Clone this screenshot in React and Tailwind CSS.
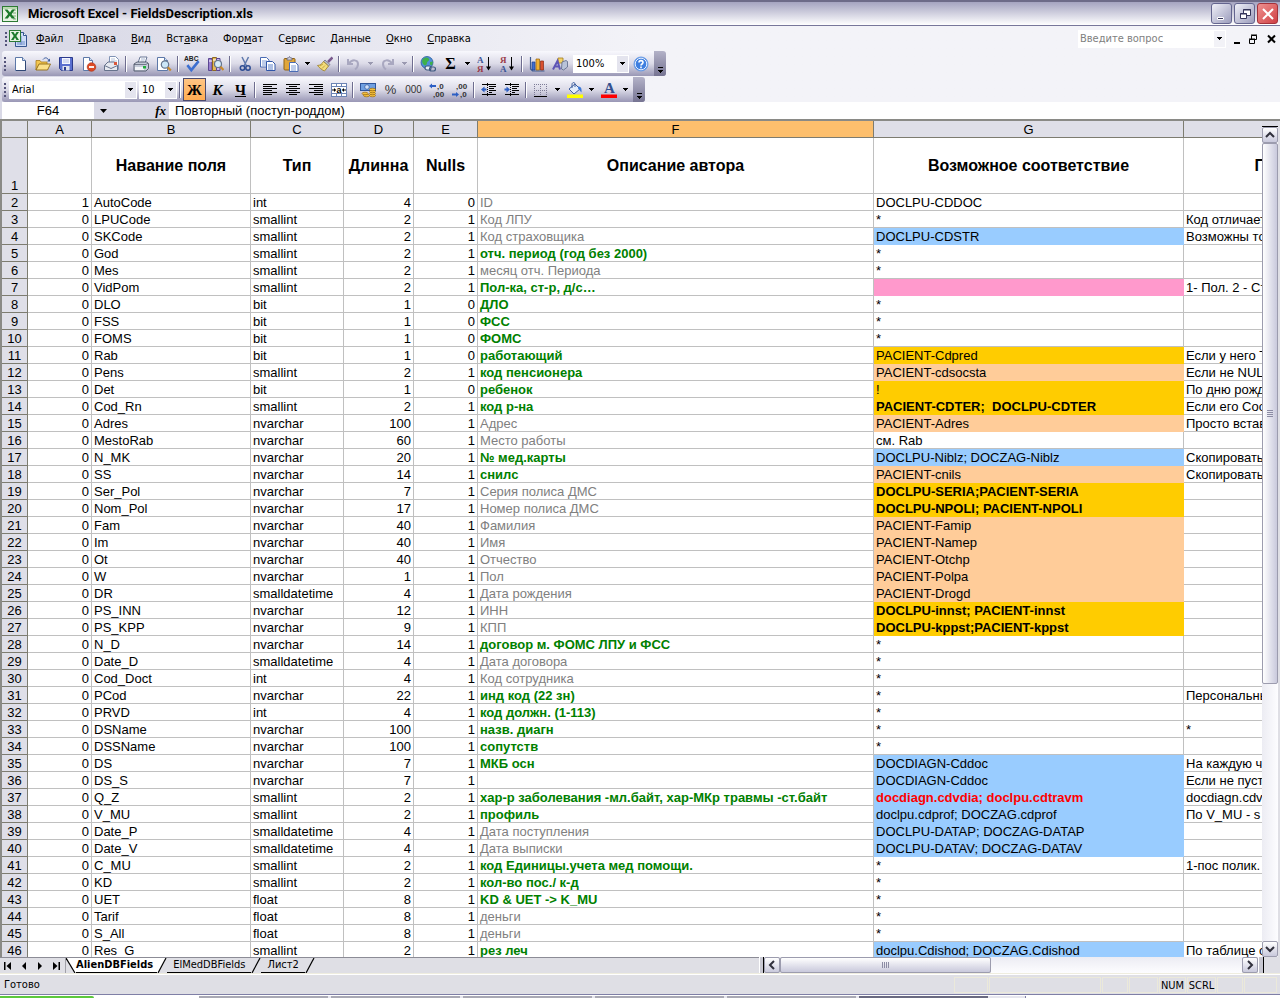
import React, { useState } from "react";

const cellFill = {
  none: "border-[#c0c0c0] bg-white",
  blue: "border-[#99ccff] bg-[#99ccff]",
  pink: "border-[#ff99cc] bg-[#ff99cc]",
  gold: "border-[#ffcc00] bg-[#ffcc00]",
  goldBold: "border-[#ffcc00] bg-[#ffcc00] font-bold",
  peach: "border-[#ffcc99] bg-[#ffcc99]",
  blueRed: "border-[#99ccff] bg-[#99ccff] font-bold text-[#ff0000]",
};

// code, name, type, length, nulls, description, is description green, match, match fill, note
const rows = [
  [1, "AutoCode", "int", 4, 0, "ID", false, "DOCLPU-CDDOC", "none", ""],
  [0, "LPUCode", "smallint", 2, 1, "Код ЛПУ", false, "*", "none", "Код отличает"],
  [0, "SKCode", "smallint", 2, 1, "Код страховщика", false, "DOCLPU-CDSTR", "blue", "Возможны то"],
  [0, "God", "smallint", 2, 1, "отч. период (год без 2000)", true, "*", "none", ""],
  [0, "Mes", "smallint", 2, 1, "месяц отч. Периода", false, "*", "none", ""],
  [0, "VidPom", "smallint", 2, 1, "Пол-ка, ст-р, д/с…", true, "", "pink", "1- Пол. 2 - Ст"],
  [0, "DLO", "bit", 1, 0, "ДЛО", true, "*", "none", ""],
  [0, "FSS", "bit", 1, 0, "ФСС", true, "*", "none", ""],
  [0, "FOMS", "bit", 1, 0, "ФОМС", true, "*", "none", ""],
  [0, "Rab", "bit", 1, 0, "работающий", true, "PACIENT-Cdpred", "gold", "Если у него Т"],
  [0, "Pens", "smallint", 2, 1, "код пенсионера", true, "PACIENT-cdsocsta", "peach", "Если не NUL"],
  [0, "Det", "bit", 1, 0, "ребенок", true, "!", "gold", "По дню рожд"],
  [0, "Cod_Rn", "smallint", 2, 1, "код р-на", true, "PACIENT-CDTER;  DOCLPU-CDTER", "goldBold", "Если его Соо"],
  [0, "Adres", "nvarchar", 100, 1, "Адрес", false, "PACIENT-Adres", "peach", "Просто встав"],
  [0, "MestoRab", "nvarchar", 60, 1, "Место работы", false, "см. Rab", "none", ""],
  [0, "N_MK", "nvarchar", 20, 1, "№ мед.карты", true, "DOCLPU-Niblz; DOCZAG-Niblz", "blue", "Скопировать"],
  [0, "SS", "nvarchar", 14, 1, "снилс", true, "PACIENT-cnils", "peach", "Скопировать"],
  [0, "Ser_Pol", "nvarchar", 7, 1, "Серия полиса ДМС", false, "DOCLPU-SERIA;PACIENT-SERIA", "goldBold", ""],
  [0, "Nom_Pol", "nvarchar", 17, 1, "Номер полиса ДМС", false, "DOCLPU-NPOLI; PACIENT-NPOLI", "goldBold", ""],
  [0, "Fam", "nvarchar", 40, 1, "Фамилия", false, "PACIENT-Famip", "peach", ""],
  [0, "Im", "nvarchar", 40, 1, "Имя", false, "PACIENT-Namep", "peach", ""],
  [0, "Ot", "nvarchar", 40, 1, "Отчество", false, "PACIENT-Otchp", "peach", ""],
  [0, "W", "nvarchar", 1, 1, "Пол", false, "PACIENT-Polpa", "peach", ""],
  [0, "DR", "smalldatetime", 4, 1, "Дата рождения", false, "PACIENT-Drogd", "peach", ""],
  [0, "PS_INN", "nvarchar", 12, 1, "ИНН", false, "DOCLPU-innst; PACIENT-innst", "goldBold", ""],
  [0, "PS_KPP", "nvarchar", 9, 1, "КПП", false, "DOCLPU-kppst;PACIENT-kppst", "goldBold", ""],
  [0, "N_D", "nvarchar", 14, 1, "договор м. ФОМС ЛПУ и ФСС", true, "*", "none", ""],
  [0, "Date_D", "smalldatetime", 4, 1, "Дата договора", false, "*", "none", ""],
  [0, "Cod_Doct", "int", 4, 1, "Код сотрудника", false, "*", "none", ""],
  [0, "PCod", "nvarchar", 22, 1, "инд код (22 зн)", true, "*", "none", "Персональны"],
  [0, "PRVD", "int", 4, 1, "код должн. (1-113)", true, "*", "none", ""],
  [0, "DSName", "nvarchar", 100, 1, "назв. диагн", true, "*", "none", "*"],
  [0, "DSSName", "nvarchar", 100, 1, "сопутств", true, "*", "none", ""],
  [0, "DS", "nvarchar", 7, 1, "МКБ осн", true, "DOCDIAGN-Cddoc", "blue", "На каждую ч"],
  [0, "DS_S", "nvarchar", 7, 1, "", false, "DOCDIAGN-Cddoc", "blue", "Если не пуст"],
  [0, "Q_Z", "smallint", 2, 1, "хар-р заболевания -мл.байт, хар-МКр травмы -ст.байт", true, "docdiagn.cdvdia; doclpu.cdtravm", "blueRed", "docdiagn.cdv"],
  [0, "V_MU", "smallint", 2, 1, "профиль", true, "doclpu.cdprof; DOCZAG.cdprof", "blue", "По V_MU - s"],
  [0, "Date_P", "smalldatetime", 4, 1, "Дата поступления", false, "DOCLPU-DATAP; DOCZAG-DATAP", "blue", ""],
  [0, "Date_V", "smalldatetime", 4, 1, "Дата выписки", false, "DOCLPU-DATAV; DOCZAG-DATAV", "blue", ""],
  [0, "C_MU", "smallint", 2, 1, "код Единицы.учета мед помощи.", true, "*", "none", "1-пос полик."],
  [0, "KD", "smallint", 2, 1, "кол-во пос./ к-д", true, "*", "none", ""],
  [0, "UET", "float", 8, 1, "KD & UET -> K_MU", true, "*", "none", ""],
  [0, "Tarif", "float", 8, 1, "деньги", false, "*", "none", ""],
  [0, "S_All", "float", 8, 1, "деньги", false, "*", "none", ""],
  [0, "Res_G", "smallint", 2, 1, "рез леч", true, "doclpu.Cdishod; DOCZAG.Cdishod", "blue", "По таблице с"],
];

const menu = [
  ["", "Ф", "айл"],
  ["", "П", "равка"],
  ["", "В", "ид"],
  ["Вст", "а", "вка"],
  ["Фор", "м", "ат"],
  ["С", "е", "рвис"],
  ["", "Д", "анные"],
  ["", "О", "кно"],
  ["", "С", "правка"],
];

/* ---------- icons ---------- */

const Svg = ({ children, className = "h-4 w-4" }) => (
  <svg viewBox="0 0 16 16" className={className} aria-hidden="true">
    {children}
  </svg>
);

const Down = ({ className = "fill-black" }) => (
  <svg viewBox="0 0 5 3" className={`h-[3px] w-[5px] ${className}`} shapeRendering="crispEdges" aria-hidden="true">
    <path d="M0 0h5v1H4v1H3v1H2V2H1V1H0z" />
  </svg>
);

const ExcelIcon = () => (
  <Svg>
    <rect x="0.5" y="0.5" width="15" height="15" fill="#e7f3e2" stroke="#2d7a34" />
    <path d="M1 1h14v2H1z" fill="#b9d9b0" />
    <path d="M11 4h3M11 7h3M11 10h3M11 13h3" stroke="#7fae78" />
    <path d="M2.5 3.5h3L8 6.5l2-3h3L9.6 8.2l3.6 4.3h-3.4L7.8 9.8l-2 2.7H2.6L6.2 8z" fill="#1c7a2b" />
  </Svg>
);

const BookIcon = () => (
  <svg viewBox="0 0 18 17" className="h-[17px] w-[18px]" aria-hidden="true">
    <path d="M6.5 2.500h8l3 3v11h-11z" fill="#cfdcf6" stroke="#35558f" />
    <path d="M8 12h8M8 14h8M12 6v9" stroke="#6f8fca" />
    <path d="M14.500 2.500v3h3" fill="#fff" stroke="#35558f" />
    <rect x="0.5" y="0.5" width="11" height="11" fill="#e7f3e2" stroke="#2d7a34" />
    <path d="M2 2h2.500L6 4.500 7.500 2H10L7.300 6 10 10H7.500L6 7.500 4.500 10H2l2.700-4z" fill="#1c7a2b" />
  </svg>
);

const NewIcon = () => (
  <Svg>
    <path d="M3.500 1.500h7l3 3v10h-10z" fill="#fff" stroke="#5d78a8" />
    <path d="M4 14.500h9.500V5" fill="none" stroke="#2f4775" />
    <path d="M10.500 1.500v3h3" fill="#d5e1f4" stroke="#5d78a8" />
  </Svg>
);

const OpenIcon = () => (
  <Svg>
    <path d="M1 4.500h4l1 1.500h6v3H4l-3 5z" fill="#f3c64f" stroke="#a77b1c" strokeWidth="0.8" />
    <path d="M1 14l3-6h11.500l-3 6z" fill="#fbe08a" stroke="#8f6a15" strokeWidth="0.9" />
    <path d="M8 3.500c2-2.500 4.500-2 5.500.5" fill="none" stroke="#3b5da0" />
    <path d="M15 2.500v3h-3z" fill="#3b5da0" />
  </Svg>
);

const SaveIcon = () => (
  <Svg>
    <path d="M1.500 1.500h13v13h-11l-2-2z" fill="#5a6fd0" stroke="#2b3a8c" />
    <rect x="4" y="2" width="8" height="6" fill="#f4f6ff" />
    <path d="M5 4h6M5 6h6" stroke="#b3bde6" />
    <rect x="4.500" y="10" width="7" height="4.500" fill="#dfe3ee" />
    <rect x="6" y="11" width="2" height="3.500" fill="#2b3a8c" />
  </Svg>
);

const PermissionIcon = () => (
  <Svg>
    <path d="M2.500 1.500h6l3 3v10h-9z" fill="#fff" stroke="#5d78a8" />
    <path d="M8.500 1.500v3h3" fill="#d5e1f4" stroke="#5d78a8" />
    <circle cx="10.500" cy="11" r="4.300" fill="#dc4a25" stroke="#a92d12" strokeWidth="0.6" />
    <path d="M8 11h5" stroke="#fff" strokeWidth="1.800" />
  </Svg>
);

const MailIcon = () => (
  <Svg>
    <path d="M5.500.5h6l3 3v10h-9z" fill="#fff" stroke="#8093b5" />
    <path d="M7 3h4M7 5h6" stroke="#b9c5dc" />
    <path d="M.5 9.500L4 6h6.500l3 3.500v5H.5z" fill="#e6e9f0" stroke="#66728c" />
    <path d="M.5 9.500l6.500 3 6.500-3" fill="none" stroke="#66728c" />
    <rect x="10" y="6" width="3" height="3" fill="#d9583c" />
  </Svg>
);

const PrintIcon = () => (
  <Svg>
    <path d="M5 7l2-6h7l-2 6z" fill="#fff" stroke="#5b6b8c" strokeWidth="0.9" />
    <path d="M8 3h4M7.500 5h4" stroke="#93a5c8" strokeWidth="0.8" />
    <path d="M1 8l3-2h9.500l2 1.500v5L13 15H1z" fill="#c5cbd9" stroke="#4d5567" strokeWidth="0.9" />
    <path d="M1 8.500h12l2-1.500" fill="none" stroke="#4d5567" strokeWidth="0.7" />
    <path d="M2 11h9v3H2z" fill="#f2f4f8" />
    <path d="M10 10h3v2.500h-3z" fill="#1fae3a" />
  </Svg>
);

const PreviewIcon = () => (
  <Svg>
    <path d="M1.500 1.500h7l3 3v10h-10z" fill="#fff" stroke="#5d78a8" />
    <path d="M8.500 1.500v3h3" fill="#d5e1f4" stroke="#5d78a8" />
    <circle cx="9" cy="8.500" r="3.700" fill="#cbe6f7" stroke="#64748c" strokeWidth="1.200" />
    <path d="M11.800 11.300l3 3.200" stroke="#c98a2c" strokeWidth="2.200" />
  </Svg>
);

const SpellIcon = () => (
  <Svg className="h-[18px] w-[18px]">
    <text x="0" y="5" className="fill-[#222222] font-['Liberation_Sans'] text-[6px] font-bold">ABC</text>
    <path d="M3 9l3.500 4.500L13 5.500" fill="none" stroke="#3d6fd0" strokeWidth="2.300" />
  </Svg>
);

const ResearchIcon = () => (
  <Svg>
    <path d="M.5 2.500h3.500v12H.5z" fill="#9a7fd0" stroke="#5b4792" />
    <path d="M4.500 1.500h4v13h-4z" fill="#e5b95a" stroke="#8d6922" />
    <path d="M8.500 2.500h3.500v12H8.500z" fill="#c7b5ea" stroke="#5b4792" />
    <path d="M1 5h3M5 4h3M9 5h3" stroke="#fff" />
    <circle cx="10" cy="8" r="3.500" fill="#d6ecfa" stroke="#64748c" strokeWidth="1.200" />
    <path d="M12.500 10.700l3 3.300" stroke="#c98a2c" strokeWidth="2.200" />
  </Svg>
);

const CutIcon = () => (
  <Svg>
    <path d="M5 1l4.500 9M11.500 1L7 10" stroke="#5f79ad" strokeWidth="1.500" />
    <circle cx="5.500" cy="12" r="2.200" fill="none" stroke="#2c4c93" strokeWidth="1.500" />
    <circle cx="11" cy="12" r="2.200" fill="none" stroke="#2c4c93" strokeWidth="1.500" />
  </Svg>
);

const CopyIcon = () => (
  <Svg>
    <path d="M.5 1.500h6l2.500 2.500v7H.5z" fill="#fff" stroke="#4a6cb5" />
    <path d="M2 5h5M2 7h5M2 9h4" stroke="#7f9bd4" />
    <path d="M6.500 5.500h6l2.500 2.500v6.500H6.500z" fill="#fff" stroke="#2f55a8" />
    <path d="M8 9h5M8 11h5M8 13h5" stroke="#5d80c9" />
  </Svg>
);

const PasteIcon = () => (
  <Svg>
    <rect x="1" y="2.500" width="11" height="11.500" rx="1" fill="#e0a63a" stroke="#8f6315" />
    <path d="M4 4V2h1.500l1-1.500 1 1.500H9v2z" fill="#d8d8e2" stroke="#62627a" strokeWidth="0.8" />
    <path d="M6.500 6.500h6l2.500 2.500v6.500H6.500z" fill="#fff" stroke="#4a6cb5" />
    <path d="M8 10h5M8 12h5M8 14h5" stroke="#7f9bd4" />
  </Svg>
);

const BrushIcon = () => (
  <Svg>
    <path d="M15.500 1.500L11 6" stroke="#7a5a8e" strokeWidth="2.500" />
    <path d="M8 4l5 4.500-1.500 1.500-5-4.500z" fill="#b9bccb" stroke="#60637a" strokeWidth="0.7" />
    <path d="M6.500 5.500l5 4.500-4 5C5 14 2.500 12 .5 9.500c2.500 0 4.500-1.500 6-4z" fill="#f2dc7c" stroke="#9c7d25" strokeWidth="0.8" />
    <path d="M3 10l3-2M5 12.500l3-3" stroke="#b9962e" strokeWidth="0.8" />
  </Svg>
);

const UndoIcon = () => (
  <Svg>
    <path d="M2 3v5h5" fill="none" stroke="#a9a8c0" strokeWidth="2" />
    <path d="M3 7.500C6 3 12 3.500 12 8c0 2-1 4-3 5.500" fill="none" stroke="#a9a8c0" strokeWidth="2" />
  </Svg>
);

const RedoIcon = () => (
  <Svg>
    <path d="M13 3v5H8" fill="none" stroke="#a9a8c0" strokeWidth="2" />
    <path d="M12 7.500C9 3 3 3.500 3 8c0 2 1 4 3 5.500" fill="none" stroke="#a9a8c0" strokeWidth="2" />
  </Svg>
);

const LinkIcon = () => (
  <Svg>
    <circle cx="7" cy="6.500" r="6" fill="#4f8fd8" stroke="#2a5a9c" strokeWidth="0.8" />
    <path d="M3 3c2-2 5-2 6 0s-2 2-2 4-2 3-3 2-3-4-1-6zM10 6l3-.5-1 4-2-1z" fill="#3fb04a" />
    <rect x="5" y="10" width="6" height="4" rx="2" fill="#e4ebf5" stroke="#3f5a80" strokeWidth="1.200" />
    <rect x="9.500" y="11" width="6" height="4" rx="2" fill="none" stroke="#3f5a80" strokeWidth="1.200" />
  </Svg>
);

const SortIcon = ({ top, bottom, topColor, bottomColor }) => (
  <Svg className="h-[18px] w-4">
    <text x="0" y="6.500" className={`font-['Liberation_Serif'] text-[9px] font-bold ${topColor}`}>{top}</text>
    <text x="0" y="15.500" className={`font-['Liberation_Serif'] text-[9px] font-bold ${bottomColor}`}>{bottom}</text>
    <path d="M11.500 1v12" stroke="#000" />
    <path d="M9 10.500h5l-2.500 4z" />
  </Svg>
);

const ChartIcon = () => (
  <Svg>
    <path d="M1.500 1v12l2 2h12" fill="none" stroke="#3e5c92" strokeWidth="1.200" />
    <path d="M3 6h3v8H3z" fill="#3f6fd1" stroke="#1f3f87" strokeWidth="0.7" />
    <path d="M7 3h3.500v11H7z" fill="#f2b233" stroke="#92600b" strokeWidth="0.7" />
    <path d="M11.500 5h3v9h-3z" fill="#d9502f" stroke="#8d2812" strokeWidth="0.7" />
  </Svg>
);

const DrawingIcon = () => (
  <Svg>
    <path d="M6 2h5v5H6z" fill="#f3d26a" stroke="#a17c1d" strokeWidth="0.8" />
    <path d="M10 6l4-1.500 1.500 1V11l-4 3-2-1z" fill="#b9c3d9" stroke="#5a6787" strokeWidth="0.8" />
    <path d="M1 13.500L5.500 5 8 13.500M3 10.500h4" fill="none" stroke="#5e55b5" strokeWidth="2" />
  </Svg>
);

const HelpIcon = () => (
  <Svg>
    <circle cx="8" cy="8" r="7" fill="#3f7fe0" stroke="#6f9fe6" />
    <circle cx="8" cy="8" r="5.800" fill="none" stroke="#e8f1ff" />
    <path d="M6 6.500c0-2.500 4-2.500 4 0 0 1.500-2 1.500-2 3M8 10.500v1.700" fill="none" stroke="#fff" strokeWidth="1.600" />
  </Svg>
);

const linePaths = {
  left: "M1 2.500h14M1 4.500h9M1 6.500h14M1 8.500h9M1 10.500h14M1 12.500h9",
  center: "M1 2.500h14M4 4.500h8M1 6.500h14M4 8.500h8M1 10.500h14M4 12.500h8",
  right: "M1 2.500h14M6 4.500h9M1 6.500h14M6 8.500h9M1 10.500h14M6 12.500h9",
};

const AlignIcon = ({ type }) => (
  <Svg>
    <path d={linePaths[type]} stroke="#000" />
  </Svg>
);

const MergeIcon = () => (
  <Svg>
    <rect x="0.5" y="1.500" width="15" height="13" fill="#fff" stroke="#6b84b5" />
    <path d="M.5 4.500h15M.5 11.500h15M5.500 1v3M10.500 1v3M5.500 12v3M10.500 12v3" stroke="#6b84b5" />
    <path d="M1 8h3.500M11.500 8H15" stroke="#000" />
    <path d="M3 6v4l2-2zM13 6v4l-2-2z" />
    <text x="5.500" y="10.500" className="font-['Liberation_Sans'] text-[9px] font-bold">a</text>
  </Svg>
);

const CurrencyIcon = () => (
  <Svg>
    <rect x="0.5" y="1.500" width="15" height="7" fill="#6f9fe0" stroke="#2f559b" />
    <circle cx="7" cy="5" r="2.300" fill="#cfe0f8" stroke="#2f559b" strokeWidth="0.7" />
    <g fill="#f4bf3c" stroke="#9a6a0c" strokeWidth="0.7">
      <ellipse cx="12.500" cy="13.500" rx="3" ry="1.300" />
      <ellipse cx="12.500" cy="11.500" rx="3" ry="1.300" />
      <ellipse cx="12.500" cy="9.500" rx="3" ry="1.300" />
      <ellipse cx="12.500" cy="7.500" rx="3" ry="1.300" />
      <ellipse cx="6.500" cy="13.500" rx="3" ry="1.300" />
      <ellipse cx="5" cy="11.500" rx="3" ry="1.300" />
    </g>
  </Svg>
);

const DecimalIcon = ({ more }) => (
  <Svg className="h-[18px] w-4">
    <text x={more ? 8 : 4} y="6.500" className="fill-[#333333] font-['Liberation_Sans'] text-[8px] font-bold">{more ? ",0" : ",00"}</text>
    <text x={more ? 4 : 8} y="15" className="fill-[#333333] font-['Liberation_Sans'] text-[8px] font-bold">{more ? ",00" : ",0"}</text>
    {more ? (
      <path d="M0 4l3-2.500V3h4v2H3v1.500z" fill="#2d5fc4" />
    ) : (
      <path d="M7 12.500L4 10v1.500H0v2h4V15z" fill="#2d5fc4" />
    )}
  </Svg>
);

const IndentIcon = ({ out }) => (
  <Svg>
    <path d="M1 2.500h14M8 4.500h7M8 6.500h5M8 8.500h7M8 10.500h3M1 12.500h14" stroke="#000" />
    <path d="M6.500 1v14" stroke="#000" strokeDasharray="1 1" />
    {out ? (
      <path d="M0 7.500L3.500 4.500v2h2v2h-2v2z" fill="#2d5fc4" />
    ) : (
      <path d="M6 7.500L2.500 4.500v2h-2v2h2v2z" fill="#2d5fc4" />
    )}
  </Svg>
);

const BordersIcon = () => (
  <Svg>
    <path d="M1.500 2v12M7.500 2v12M13.500 2v12M1 2.500h13M1 8.500h13" stroke="#7d7c97" strokeDasharray="1 1" fill="none" />
    <path d="M1 14.500h13" stroke="#000" />
  </Svg>
);

const FillIcon = () => (
  <Svg className="h-[18px] w-4">
    <path d="M2 7l6-5 5 5-6 5z" fill="#e2ebfa" stroke="#3f5f9e" />
    <path d="M5 6V2.500C5 0 8 0 8 2v3" fill="none" stroke="#3f5f9e" />
    <path d="M11 4.500c3 0 4 2 3.500 6-1.500-1-2-3-3.500-4z" fill="#3d78d6" />
    <path d="M0 12.500h16v3.500H0z" fill="#ffff00" />
  </Svg>
);

const FontColorIcon = () => (
  <Svg className="h-[18px] w-4">
    <text x="3" y="11" className="fill-[#33508f] font-['Liberation_Serif'] text-[15px] font-bold">A</text>
    <path d="M0 12.500h16v3.500H0z" fill="#ff0000" />
  </Svg>
);

/* ---------- toolbar parts ---------- */

const ToolButton = ({ label, active, children }) => (
  <button
    type="button"
    aria-label={label}
    className={`flex h-[23px] w-[23px] shrink-0 items-center justify-center ${
      active ? "border border-[#4b4b6f] bg-linear-to-b from-[#ffc583] to-[#ffad52]" : ""
    }`}
  >
    {children}
  </button>
);

const DropButton = ({ label, disabled }) => (
  <button type="button" aria-label={label} className="flex h-[23px] w-[11px] shrink-0 items-center justify-center">
    <Down className={disabled ? "fill-[#9a99b0]" : "fill-black"} />
  </button>
);

const Separator = () => (
  <div className="flex h-4 w-[6px] shrink-0 justify-center">
    <div className="w-px bg-[#6e6d8f]" />
    <div className="w-px bg-white" />
  </div>
);

const Grip = () => (
  <div className="flex w-[6px] shrink-0 flex-col items-center gap-[2px]">
    <i className="h-[2px] w-[2px] bg-[#54547a]" />
    <i className="h-[2px] w-[2px] bg-[#54547a]" />
    <i className="h-[2px] w-[2px] bg-[#54547a]" />
    <i className="h-[2px] w-[2px] bg-[#54547a]" />
  </div>
);

const ToolbarEnd = () => (
  <button
    type="button"
    aria-label="Параметры панелей инструментов"
    className="ml-[2px] flex w-3 shrink-0 flex-col items-center justify-end gap-[2px] self-stretch rounded-r-[3px] bg-linear-to-b from-[#b3b2c8] to-[#767492] pb-[3px]"
  >
    <i className="h-px w-[5px] bg-black" />
    <Down />
  </button>
);

const Combo = ({ label, value, options, className }) => (
  <div className={`relative flex h-[18px] shrink-0 items-center bg-white ${className}`}>
    <select aria-label={label} defaultValue={value} className="h-full w-full appearance-none bg-transparent pl-[3px] text-[11px] leading-[14px] outline-none">
      {options.map((o) => (
        <option key={o}>{o}</option>
      ))}
    </select>
    <span className="pointer-events-none absolute inset-y-px right-px flex w-[11px] items-center justify-center bg-[#e4e4ee]">
      <Down />
    </span>
  </div>
);

const TitleBar = () => (
  <header className="flex h-[26px] shrink-0 items-center border-t-2 border-b border-t-[#6d6b88] border-b-[#77769a] bg-linear-to-b from-[#a5a4c0] to-[#ffffff] pr-[2px] pl-[2px]">
    <ExcelIcon />
    <h1 className="flex-1 pl-[10px] font-['Roboto',sans-serif] text-[13px] leading-4 font-bold whitespace-nowrap">
      Microsoft Excel - FieldsDescription.xls
    </h1>
    <div className="flex gap-[2px]">
      <button type="button" aria-label="Свернуть" className="flex h-[21px] w-[21px] items-center justify-center rounded-[3px] border border-[#64658f] bg-linear-to-br from-[#f0f0f8] to-[#9c9dbc]">
        <Svg><path d="M3.500 11.500h6v2h-6z" fill="#34345a" stroke="#fff" /></Svg>
      </button>
      <button type="button" aria-label="Восстановить" className="flex h-[21px] w-[21px] items-center justify-center rounded-[3px] border border-[#64658f] bg-linear-to-br from-[#f0f0f8] to-[#9c9dbc]">
        <Svg>
          <path d="M6.500 3.500h7v6h-7zM6 4h8" fill="#fff" stroke="#34345a" />
          <path d="M3.500 7.500h6v5h-6zM3 8h7" fill="#fff" stroke="#34345a" />
        </Svg>
      </button>
      <button type="button" aria-label="Закрыть" className="flex h-[21px] w-[21px] items-center justify-center rounded-[3px] border border-[#a3323a] bg-linear-to-br from-[#ee9090] to-[#cf3d44]">
        <Svg><path d="M3 3l10 10M13 3L3 13" stroke="#fff" strokeWidth="2" /></Svg>
      </button>
    </div>
  </header>
);

const MenuBar = () => (
  <div className="flex h-[25px] shrink-0 items-center pl-[3px]">
    <Grip />
    <BookIcon />
    <nav className="flex flex-1 gap-px pl-[2px]">
      {menu.map(([before, key, after]) => (
        <button key={key + after} type="button" className="px-[7px] text-[11px] leading-[14px] whitespace-nowrap">
          {before}
          <u>{key}</u>
          {after}
        </button>
      ))}
    </nav>
    <div className="flex h-[18px] w-[148px] items-center bg-white pr-px">
      <input aria-label="Введите вопрос" placeholder="Введите вопрос" className="min-w-0 flex-1 pl-[2px] text-[11px] leading-[14px] outline-none placeholder:text-[#808080]" />
      <button type="button" aria-label="Список вопросов" className="flex h-4 w-[11px] items-center justify-center bg-[#f2f2f7]">
        <Down />
      </button>
    </div>
    <div className="flex pl-[3px]">
      <button type="button" aria-label="Свернуть книгу" className="flex h-4 w-4 items-center justify-center">
        <Svg><path d="M5 11h6v2H5z" /></Svg>
      </button>
      <button type="button" aria-label="Восстановить книгу" className="flex h-4 w-4 items-center justify-center">
        <Svg>
          <path d="M6.500 4.500h5v4h-5zM6 4h6M4.500 8.500h5v4h-5zM4 8h6" fill="#f3f3f8" stroke="#000" />
        </Svg>
      </button>
      <button type="button" aria-label="Закрыть книгу" className="ml-[3px] flex h-4 w-4 items-center justify-center">
        <Svg><path d="M4 4.500l7 7M11 4.500l-7 7" stroke="#000" strokeWidth="2" /></Svg>
      </button>
    </div>
  </div>
);

const barClass =
  "flex h-[25px] w-max items-center rounded-[3px] bg-linear-to-b from-[#f8f8fd] via-[#dcdbe8] to-[#9997b5]";

const StandardBar = () => (
  <div className={barClass}>
    <Grip />
    <ToolButton label="Создать"><NewIcon /></ToolButton>
    <ToolButton label="Открыть"><OpenIcon /></ToolButton>
    <ToolButton label="Сохранить"><SaveIcon /></ToolButton>
    <ToolButton label="Разрешения"><PermissionIcon /></ToolButton>
    <ToolButton label="Сообщение"><MailIcon /></ToolButton>
    <Separator />
    <ToolButton label="Печать"><PrintIcon /></ToolButton>
    <ToolButton label="Просмотр"><PreviewIcon /></ToolButton>
    <Separator />
    <ToolButton label="Орфография"><SpellIcon /></ToolButton>
    <ToolButton label="Справочники"><ResearchIcon /></ToolButton>
    <Separator />
    <ToolButton label="Вырезать"><CutIcon /></ToolButton>
    <ToolButton label="Копировать"><CopyIcon /></ToolButton>
    <ToolButton label="Вставить"><PasteIcon /></ToolButton>
    <DropButton label="Параметры вставки" />
    <ToolButton label="Формат по образцу"><BrushIcon /></ToolButton>
    <Separator />
    <ToolButton label="Отменить"><UndoIcon /></ToolButton>
    <DropButton label="Список отмены" disabled />
    <ToolButton label="Вернуть"><RedoIcon /></ToolButton>
    <DropButton label="Список возврата" disabled />
    <Separator />
    <ToolButton label="Гиперссылка"><LinkIcon /></ToolButton>
    <ToolButton label="Автосумма">
      <b className="font-['Liberation_Serif',serif] text-[16px] leading-4">Σ</b>
    </ToolButton>
    <DropButton label="Функции" />
    <ToolButton label="По возрастанию">
      <SortIcon top="А" bottom="Я" topColor="fill-[#3b5597]" bottomColor="fill-[#9b3a48]" />
    </ToolButton>
    <ToolButton label="По убыванию">
      <SortIcon top="Я" bottom="А" topColor="fill-[#9b3a48]" bottomColor="fill-[#3b5597]" />
    </ToolButton>
    <Separator />
    <ToolButton label="Диаграмма"><ChartIcon /></ToolButton>
    <ToolButton label="Рисование"><DrawingIcon /></ToolButton>
    <Combo label="Масштаб" value="100%" options={["200%", "100%", "75%"]} className="ml-[2px] w-[56px]" />
    <ToolButton label="Справка"><HelpIcon /></ToolButton>
    <ToolbarEnd />
  </div>
);

const FormatBar = () => (
  <div className={barClass}>
    <Grip />
    <Combo label="Шрифт" value="Arial" options={["Arial", "Tahoma"]} className="ml-px w-[128px]" />
    <Combo label="Размер" value="10" options={["8", "10", "12"]} className="ml-[2px] w-[38px]" />
    <Separator />
    <ToolButton label="Полужирный" active>
      <b className="font-['Liberation_Serif',serif] text-[15px] leading-4">Ж</b>
    </ToolButton>
    <ToolButton label="Курсив">
      <b className="font-['Liberation_Serif',serif] text-[15px] leading-4 italic">К</b>
    </ToolButton>
    <ToolButton label="Подчеркнутый">
      <b className="font-['Liberation_Serif',serif] text-[15px] leading-4 underline">Ч</b>
    </ToolButton>
    <Separator />
    <ToolButton label="По левому краю"><AlignIcon type="left" /></ToolButton>
    <ToolButton label="По центру"><AlignIcon type="center" /></ToolButton>
    <ToolButton label="По правому краю"><AlignIcon type="right" /></ToolButton>
    <ToolButton label="Объединить"><MergeIcon /></ToolButton>
    <Separator />
    <ToolButton label="Денежный формат"><CurrencyIcon /></ToolButton>
    <ToolButton label="Процентный формат">
      <span className="font-['Liberation_Sans',sans-serif] text-[13px] leading-4 text-[#333333]">%</span>
    </ToolButton>
    <ToolButton label="Формат с разделителями">
      <span className="font-['Liberation_Sans',sans-serif] text-[10px] leading-4 text-[#333333]">000</span>
    </ToolButton>
    <ToolButton label="Увеличить разрядность"><DecimalIcon more /></ToolButton>
    <ToolButton label="Уменьшить разрядность"><DecimalIcon /></ToolButton>
    <Separator />
    <ToolButton label="Уменьшить отступ"><IndentIcon out /></ToolButton>
    <ToolButton label="Увеличить отступ"><IndentIcon /></ToolButton>
    <Separator />
    <ToolButton label="Границы"><BordersIcon /></ToolButton>
    <DropButton label="Виды границ" />
    <ToolButton label="Цвет заливки"><FillIcon /></ToolButton>
    <DropButton label="Цвета заливки" />
    <ToolButton label="Цвет шрифта"><FontColorIcon /></ToolButton>
    <DropButton label="Цвета шрифта" />
    <ToolbarEnd />
  </div>
);

const FormulaBar = () => (
  <div className="flex h-[17px] shrink-0 bg-[#d9d9e6] pl-[2px] font-['Liberation_Sans',sans-serif] text-[13px] leading-[17px]">
    <input aria-label="Имя ячейки" defaultValue="F64" className="w-[92px] bg-white text-center outline-none" />
    <button type="button" aria-label="Список имен" className="flex w-[19px] items-center justify-center">
      <svg viewBox="0 0 7 4" className="h-1 w-[7px]" aria-hidden="true">
        <path d="M0 0h7L3.500 4z" />
      </svg>
    </button>
    <button type="button" aria-label="Вставить функцию" className="ml-[36px] w-5 pr-[3px] text-right font-['Liberation_Serif',serif] text-[13px] leading-[14px] font-bold italic">
      fx
    </button>
    <input aria-label="Строка формул" defaultValue="Повторный (поступ-роддом)" className="min-w-0 flex-1 bg-white pl-[6px] outline-none" />
  </div>
);

/* ---------- sheet ---------- */

const headCell = "h-[17px] border-r border-b border-[#7d7c70] p-0 pt-[2px] text-center font-normal";
const rowHead = "border-r border-b border-[#7d7c70] bg-[#dfdfe8] p-0 pt-[2px] text-center font-normal";
const cell = "border-r border-b border-[#c0c0c0] p-0 pt-[2px] pl-[2px] whitespace-pre";
const numCell = "border-r border-b border-[#c0c0c0] p-0 pt-[2px] pr-[2px] text-right";
const titleCell = "border-r border-b border-[#c0c0c0] p-0 text-center text-[16px] font-bold whitespace-nowrap";

const Sheet = () => (
  <div className="min-w-0 flex-1 overflow-hidden bg-white">
    <table className="w-[1422px] table-fixed border-separate border-spacing-0 bg-white font-['Liberation_Sans',sans-serif] text-[13px] leading-[14px]">
      <colgroup>
        <col className="w-[26px]" />
        <col className="w-[64px]" />
        <col className="w-[159px]" />
        <col className="w-[93px]" />
        <col className="w-[70px]" />
        <col className="w-[64px]" />
        <col className="w-[396px]" />
        <col className="w-[310px]" />
        <col className="w-[240px]" />
      </colgroup>
      <thead>
        <tr className="bg-[#dfdfe8]">
          <th className={headCell}></th>
          {["A", "B", "C", "D", "E", "F", "G", ""].map((c) => (
            <th key={c} scope="col" className={c === "F" ? `${headCell} bg-[#fdbf6d]` : headCell}>
              {c}
            </th>
          ))}
        </tr>
      </thead>
      <tbody>
        <tr className="h-14">
          <th scope="row" className={`${rowHead} align-bottom`}>1</th>
          <td className={titleCell}></td>
          <td className={titleCell}>Навание поля</td>
          <td className={titleCell}>Тип</td>
          <td className={titleCell}>Длинна</td>
          <td className={titleCell}>Nulls</td>
          <td className={titleCell}>Описание автора</td>
          <td className={titleCell}>Возможное соответствие</td>
          <td className={titleCell}>Примечание</td>
        </tr>
        {rows.map(([code, name, type, len, nulls, desc, green, match, fill, note], i) => (
          <tr key={name} className="h-[17px]">
            <th scope="row" className={rowHead}>{i + 2}</th>
            <td className={numCell}>{code}</td>
            <td className={cell}>{name}</td>
            <td className={cell}>{type}</td>
            <td className={numCell}>{len}</td>
            <td className={numCell}>{nulls}</td>
            <td className={`${cell} ${green ? "font-bold text-[#008000]" : "text-[#808080]"}`}>{desc}</td>
            <td className={`border-r border-b p-0 pt-[2px] pl-[2px] whitespace-pre ${cellFill[fill]}`}>{match}</td>
            <td className={cell}>{note}</td>
          </tr>
        ))}
      </tbody>
    </table>
  </div>
);

const ScrollButton = ({ label, d }) => (
  <button type="button" aria-label={label} className="flex h-4 w-4 shrink-0 items-center justify-center rounded-[2px] border border-[#9c9cae] bg-linear-to-b from-[#ffffff] to-[#c9c9dc]">
    <svg viewBox="0 0 10 10" className="h-[10px] w-[10px]" aria-hidden="true">
      <path d={d} fill="none" stroke="#30303c" strokeWidth="2" />
    </svg>
  </button>
);

const VerticalScroll = () => (
  <div className="flex w-4 shrink-0 flex-col bg-linear-to-r from-[#ececf3] to-[#fdfdff]">
    <div className="h-[6px] shrink-0 border-b border-black bg-[#dcdce4]" />
    <ScrollButton label="Вверх" d="M1 7l4-4 4 4" />
    <div className="flex flex-[540] flex-col items-center justify-center gap-px rounded-[2px] border border-[#9c9cae] bg-linear-to-r from-[#ffffff] to-[#c9c9dc]">
      <i className="h-px w-[6px] bg-[#8c8ca4]" />
      <i className="h-px w-[6px] bg-[#8c8ca4]" />
      <i className="h-px w-[6px] bg-[#8c8ca4]" />
      <i className="h-px w-[6px] bg-[#8c8ca4]" />
    </div>
    <div className="flex-[258]" />
    <ScrollButton label="Вниз" d="M1 3l4 4 4-4" />
  </div>
);

const HorizontalScroll = () => (
  <div className="flex w-[505px] shrink-0">
    <div className="w-[5px] shrink-0 border-r border-l border-r-black border-l-white bg-[#c8c8d2]" />
    <ScrollButton label="Влево" d="M7 1L3 5l4 4" />
    <div className="flex flex-[209] items-center justify-center gap-px rounded-[2px] border border-[#9c9cae] bg-linear-to-b from-[#ffffff] to-[#c9c9dc]">
      <i className="h-[6px] w-px bg-[#8c8ca4]" />
      <i className="h-[6px] w-px bg-[#8c8ca4]" />
      <i className="h-[6px] w-px bg-[#8c8ca4]" />
      <i className="h-[6px] w-px bg-[#8c8ca4]" />
    </div>
    <div className="flex-[250] bg-linear-to-b from-[#ececf3] to-[#fdfdff]" />
    <ScrollButton label="Вправо" d="M3 1l4 4-4 4" />
    <div className="w-[6px] shrink-0 border-r border-l border-r-black border-l-white bg-[#c8c8d2]" />
  </div>
);

const NavButton = ({ label, d }) => (
  <button type="button" aria-label={label} className="flex h-4 w-4 items-center justify-center">
    <svg viewBox="0 0 8 8" className="h-2 w-2" aria-hidden="true">
      <path d={d} />
    </svg>
  </button>
);

const Slash = ({ d, left, right }) => (
  <svg viewBox="0 0 10 15" className="h-[15px] w-[10px] shrink-0" aria-hidden="true">
    {left && <path d={left} fill="#fff" />}
    {right && <path d={right} fill="#fff" />}
    <path d={d} fill="none" stroke="#000" strokeWidth="1.200" />
  </svg>
);

const SheetTabs = () => {
  const [active, setActive] = useState("AlienDBFields");
  const tabs = ["AlienDBFields", "ElMedDBFields", "Лист2"];

  return (
    <div className="flex h-4 min-w-0 flex-1 border-t border-[#8c8c96]">
      <div className="flex w-[66px] shrink-0 border-r border-[#a0a0a8]">
        <NavButton label="Первый лист" d="M0 0h1.500v8H0zM7 0v8L2.500 4z" />
        <NavButton label="Предыдущий лист" d="M6 0v8L2 4z" />
        <NavButton label="Следующий лист" d="M2 0v8l4-4z" />
        <NavButton label="Последний лист" d="M6.500 0H8v8H6.500zM1 0v8l4.500-4z" />
      </div>
      <Slash d="M0 0l9 15" right="M0 0h10v15H9z" />
      {tabs.map((tab) => (
        <React.Fragment key={tab}>
          <button
            type="button"
            onClick={() => setActive(tab)}
            className={
              tab === active
                ? "border-b border-black bg-white pr-1 text-[11px] leading-[14px] font-bold"
                : "border-b border-black px-[6px] text-[11px] leading-[14px]"
            }
          >
            {tab}
          </button>
          <Slash d="M9 0L1 15" left={tab === active ? "M0 0h9L1 15H0z" : null} />
        </React.Fragment>
      ))}
    </div>
  );
};

const box = "h-4 border border-[#ebe9da] text-center text-[11px] leading-[15px]";

const StatusBar = () => (
  <footer className="flex h-5 shrink-0 items-center gap-px border-b border-[#7f7fa6] pr-[3px] pl-1">
    <p className="flex-1 text-[11px] leading-[14px]">Готово</p>
    <span className={`${box} w-[34px]`}></span>
    <span className={`${box} w-[112px]`}></span>
    <span className={`${box} w-[26px]`}></span>
    <span className={`${box} w-[29px]`}></span>
    <span className={`${box} w-[27px]`}>NUM</span>
    <span className={`${box} w-[29px]`}>SCRL</span>
    <span className={`${box} w-[26px]`}></span>
    <span className={`${box} w-[33px]`}></span>
  </footer>
);

const Taskbar = () => (
  <div className="flex h-[3px] shrink-0 border-t border-white bg-white">
    <div className="w-[94px] rounded-tr-[2px] bg-[#5cc83c]" />
    <div className="w-[105px]" />
    <div className="flex w-[827px] gap-[3px] border-r border-[#7f7fa6] bg-[#e6e6ee]">
      <i className="w-[129px] bg-[#a9a9b4]" />
      <i className="w-[129px] bg-[#a9a9b4]" />
      <i className="w-[129px] bg-[#a9a9b4]" />
      <i className="w-[129px] bg-[#a9a9b4]" />
      <i className="w-[129px] bg-[#a9a9b4]" />
      <i className="w-[129px] bg-[#6a6a80]" />
    </div>
  </div>
);

const App = () => {
  return (
    <div className="flex h-screen flex-col overflow-hidden bg-[#dfdfe5] font-['DejaVu_Sans_Condensed','DejaVu_Sans',sans-serif] text-black">
      <TitleBar />
      <div className="shrink-0 bg-linear-to-r from-[#d7d7e5] to-[#f3f3f8] to-50%">
        <MenuBar />
        <div className="flex flex-col gap-px pl-[2px]">
          <StandardBar />
          <FormatBar />
        </div>
      </div>
      <FormulaBar />
      <main className="flex min-h-0 flex-1 border-t-2 border-l-2 border-[#8a8a86] pr-[2px]">
        <Sheet />
        <VerticalScroll />
      </main>
      <div className="flex h-4 shrink-0">
        <SheetTabs />
        <HorizontalScroll />
        <div className="w-4 shrink-0" />
      </div>
      <div className="h-[2px] shrink-0 border-t border-[#efeddf] bg-white" />
      <StatusBar />
      <Taskbar />
    </div>
  );
};

export default App;
